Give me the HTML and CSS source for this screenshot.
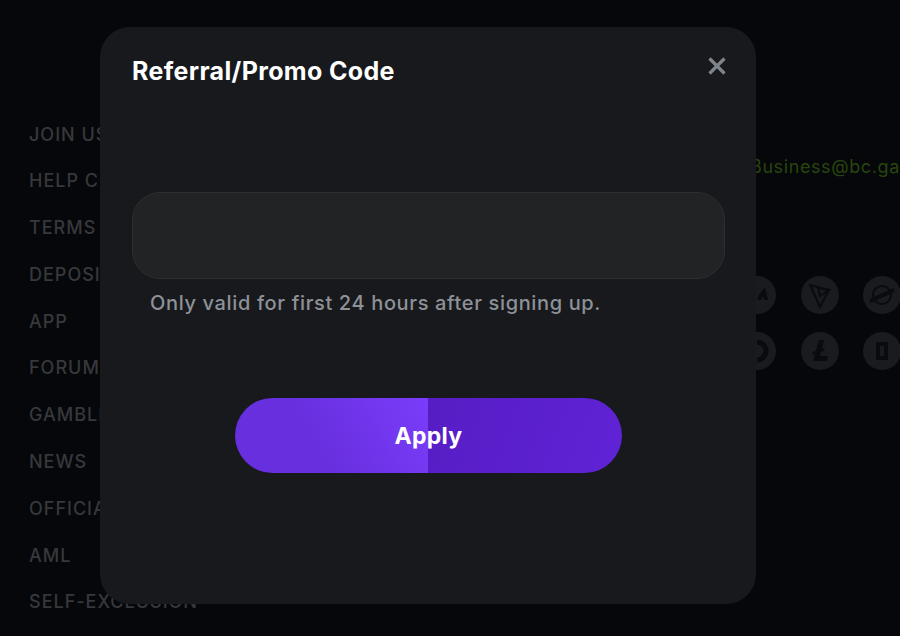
FILE: index.html
```html
<!DOCTYPE html>
<html lang="en">
<head>
<meta charset="utf-8">
<title>Referral/Promo Code</title>
<link rel="stylesheet" href="styles.css">
</head>
<body>
<footer class="footer">
  <nav class="links">
    <a>JOIN US</a>
    <a>HELP CENTER</a>
    <a>TERMS</a>
    <a>DEPOSITS</a>
    <a>APP</a>
    <a>FORUM</a>
    <a>GAMBLING</a>
    <a>NEWS</a>
    <a>OFFICIAL</a>
    <a>AML</a>
    <a>SELF-EXCLUSION</a>
  </nav>
  <div class="side">
    <p class="mail">Business@bc.game</p>
    <div class="coins">
      <span class="coin"><svg viewBox="0 0 38 38"><path class="glyph" d="M21 19 27 11l3 13h-4l-1-4-2 4h-4z"/></svg></span>
      <span class="coin"><svg viewBox="0 0 38 38"><path class="line" d="M9 9 28 14 19 31zM9 9l10 22M28 14l-11-2 2 8z"/></svg></span>
      <span class="coin"><svg viewBox="0 0 38 38"><circle class="line" cx="19" cy="19" r="9"/><path class="line" d="M7 24 31 13M7 26l24-11"/></svg></span>
      <span class="coin"><svg viewBox="0 0 38 38"><path class="line wide" d="M19 10a9 9 0 0 1 0 18"/></svg></span>
      <span class="coin"><svg viewBox="0 0 38 38"><path class="glyph" d="M18 8h5l-2 9 3-1-1 3-3 1-1 4h8l-1 5H12l2-7-3 1 1-3 3-1z"/></svg></span>
      <span class="coin"><svg viewBox="0 0 38 38"><path class="glyph" d="M13 10h12v18H13zM17 14v10h4V14z"/></svg></span>
    </div>
  </div>
</footer>

<section class="modal">
  <h1 class="title">Referral/Promo Code</h1>
  <button class="close" aria-label="Close">
    <svg viewBox="0 0 20 20"><path d="M2.500 2.500 17.500 17.500M17.500 2.500 2.500 17.500"/></svg>
  </button>
  <div class="field"></div>
  <p class="hint">Only valid for first 24 hours after signing up.</p>
  <button class="apply">Apply</button>
</section>
</body>
</html>
```

FILE: styles.css
```css
html, body {
  margin: 0;
  height: 100%;
}

body {
  position: relative;
  width: 900px;
  height: 636px;
  overflow: hidden;
  background: #05070a;
  font-family: Inter, "Liberation Sans", sans-serif;
}

.footer {
  display: flex;
  justify-content: space-between;
  height: 636px;
  box-sizing: border-box;
  padding: 120.500px 0 0 29px;
  overflow: hidden;
}

.links {
  display: flex;
  flex-direction: column;
  gap: 18.800px;
  width: 300px;
}

.links a {
  color: #37383c;
  font-size: 18px;
  line-height: 28px;
  font-weight: 500;
  letter-spacing: 1px;
  white-space: nowrap;
}

.side {
  width: 150px;
  overflow: hidden;
  flex: none;
}

.mail {
  margin: 33px 0 0;
  color: #29450f;
  font-size: 18px;
  line-height: 26px;
  letter-spacing: 0.600px;
  white-space: nowrap;
}

.coins {
  display: grid;
  grid-template-columns: repeat(3, 38px);
  gap: 18px 24.500px;
  margin: 96px 0 0 -12px;
}

.coin {
  display: block;
  width: 38px;
  height: 38px;
  border-radius: 50%;
  background: #191b1e;
}

.coin svg {
  display: block;
  width: 38px;
  height: 38px;
}

.glyph {
  fill: #090b0e;
}

.line {
  fill: none;
  stroke: #090b0e;
  stroke-width: 2;
}

.wide {
  stroke-width: 5;
}

.modal {
  position: absolute;
  left: 100px;
  top: 27px;
  width: 656px;
  height: 577px;
  box-sizing: border-box;
  padding: 27px 31px 0 32px;
  border-radius: 30px;
  background: #17191c;
}

.title {
  margin: 0;
  color: #ffffff;
  font-size: 25px;
  line-height: 34px;
  font-weight: 700;
  letter-spacing: 0.350px;
  white-space: nowrap;
}

.close {
  position: absolute;
  top: 29px;
  right: 29px;
  width: 20px;
  height: 20px;
  padding: 0;
  border: 0;
  background: none;
}

.close svg {
  display: block;
  width: 20px;
  height: 20px;
}

.close path {
  fill: none;
  stroke: #7f848c;
  stroke-width: 3.200;
}

.field {
  box-sizing: border-box;
  height: 87px;
  margin-top: 104px;
  border: 1px solid #2c2e31;
  border-radius: 28px;
  background: #212325;
}

.hint {
  margin: 10px 0 0 18px;
  color: #8e9197;
  font-size: 20px;
  line-height: 28px;
  font-weight: 500;
  letter-spacing: 0.640px;
  white-space: nowrap;
}

.apply {
  display: block;
  width: 387px;
  height: 75px;
  margin: 81px auto 0;
  padding: 0;
  border: 0;
  border-radius: 38px;
  color: #ffffff;
  font-family: inherit;
  font-size: 23px;
  font-weight: 700;
  letter-spacing: 0.300px;
  background:
    linear-gradient(60deg, #672fdd 40%, #7a3dfb 100%) left / 193px 100% no-repeat,
    linear-gradient(110deg, #561dc4, #6023d6) right / 194px 100% no-repeat;
}
```
